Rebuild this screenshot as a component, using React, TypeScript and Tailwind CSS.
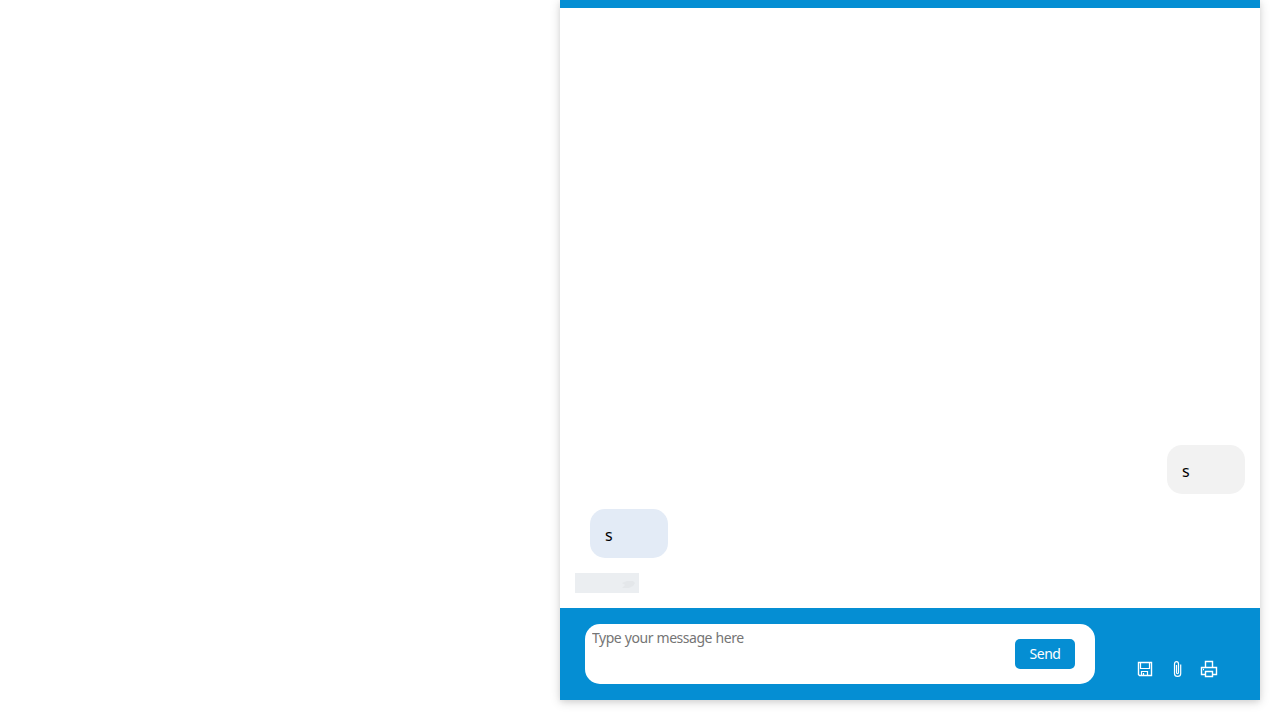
import React from "react";

const font = "font-['Noto_Sans',sans-serif]";

function SaveIcon() {
  return (
    <svg width="16" height="18" viewBox="0 0 16 18" fill="none" stroke="white">
      <path d="M1.5 2.5H14.5V15.5H2.5L1.5 14.5Z" strokeWidth="1.4" />
      <path d="M3.5 2.5V8.5H12.5V2.5" strokeWidth="1.2" />
      <path d="M4.5 15.5V11.5H10.5V15.5M6.5 13V15.5" strokeWidth="1.2" />
    </svg>
  );
}

function ClipIcon() {
  return (
    <svg width="10" height="18" viewBox="0 0 10 18" fill="none" stroke="white" strokeWidth="1.2">
      <path d="M3.5 5V12.6C3.5 14.1 5.5 14.1 5.5 12.6V4C5.5 .9 1.5 .9 1.5 4V13.5C1.5 17.4 7.7 17.4 7.7 13.5V4.5" />
    </svg>
  );
}

function PrinterIcon() {
  return (
    <svg width="18" height="18" viewBox="0 0 18 18" fill="none" stroke="white" strokeWidth="1.4">
      <path d="M5.5 7.5V1.5H12.5V7.5" />
      <path d="M5 14.5H1.5V7.5H16.5V14.5H13" />
      <path d="M5.5 11.5H12.5V16.5H5.5Z" />
      <path d="M3 9.5H4" />
    </svg>
  );
}

function Bubble({ text, className }: { text: string; className: string }) {
  return (
    <div className={`h-[49px] w-[78px] rounded-[15px] pl-[15px] pt-[17px] text-[16px] leading-[19px] text-black ${className}`}>
      {text}
    </div>
  );
}

export default function App() {
  return (
    <div className={`flex h-[720px] justify-end overflow-hidden bg-white pr-5 ${font}`}>
      <div className="flex h-[700px] w-[700px] flex-col bg-white shadow-[0_2px_10px_0_rgba(0,0,0,0.16),0_2px_5px_0_rgba(0,0,0,0.06)]">
        <div className="h-2 shrink-0 bg-[#058ed3]" />
        <div className="flex flex-1 flex-col justify-end px-[15px] pb-[15px]">
          <Bubble text="s" className="self-end bg-[#f2f2f2]" />
          <Bubble text="s" className="ml-[15px] mt-[15px] bg-[#e3ebf6]" />
          <div className="mt-[15px] flex h-5 w-16 items-center justify-end bg-[#ebeef1] pr-[3px]">
            <svg width="15" height="10" viewBox="0 0 15 10" className="mt-1 blur-[0.5px]">
              <path d="M1 8L4 5L1 3L6 1H12L14 3L12 6L8 8Z" fill="#e4e7ea" />
            </svg>
          </div>
        </div>
        <div className="flex h-[92px] shrink-0 bg-[#058ed3] pl-[25px] pt-4">
          <div className="flex h-[60px] w-[510px] rounded-[15px] bg-white pl-[7px] pr-5">
            <textarea
              placeholder="Type your message here"
              className="h-[60px] w-[423px] resize-none pt-1 text-[14px] leading-[19px] tracking-[-0.47px] [word-spacing:0.4px] placeholder:text-[#757575] focus:outline-none"
            />
            <button className="mt-[15px] h-[30px] w-[60px] rounded-[5px] bg-[#058ed3] pb-px text-[14px] leading-[19px] tracking-[-0.5px] text-white">Send</button>
          </div>
          <div className="ml-[42px] mt-9 flex h-[18px] items-center">
            <SaveIcon />
            <div className="ml-5"><ClipIcon /></div>
            <div className="ml-[17px]"><PrinterIcon /></div>
          </div>
        </div>
      </div>
    </div>
  );
}
